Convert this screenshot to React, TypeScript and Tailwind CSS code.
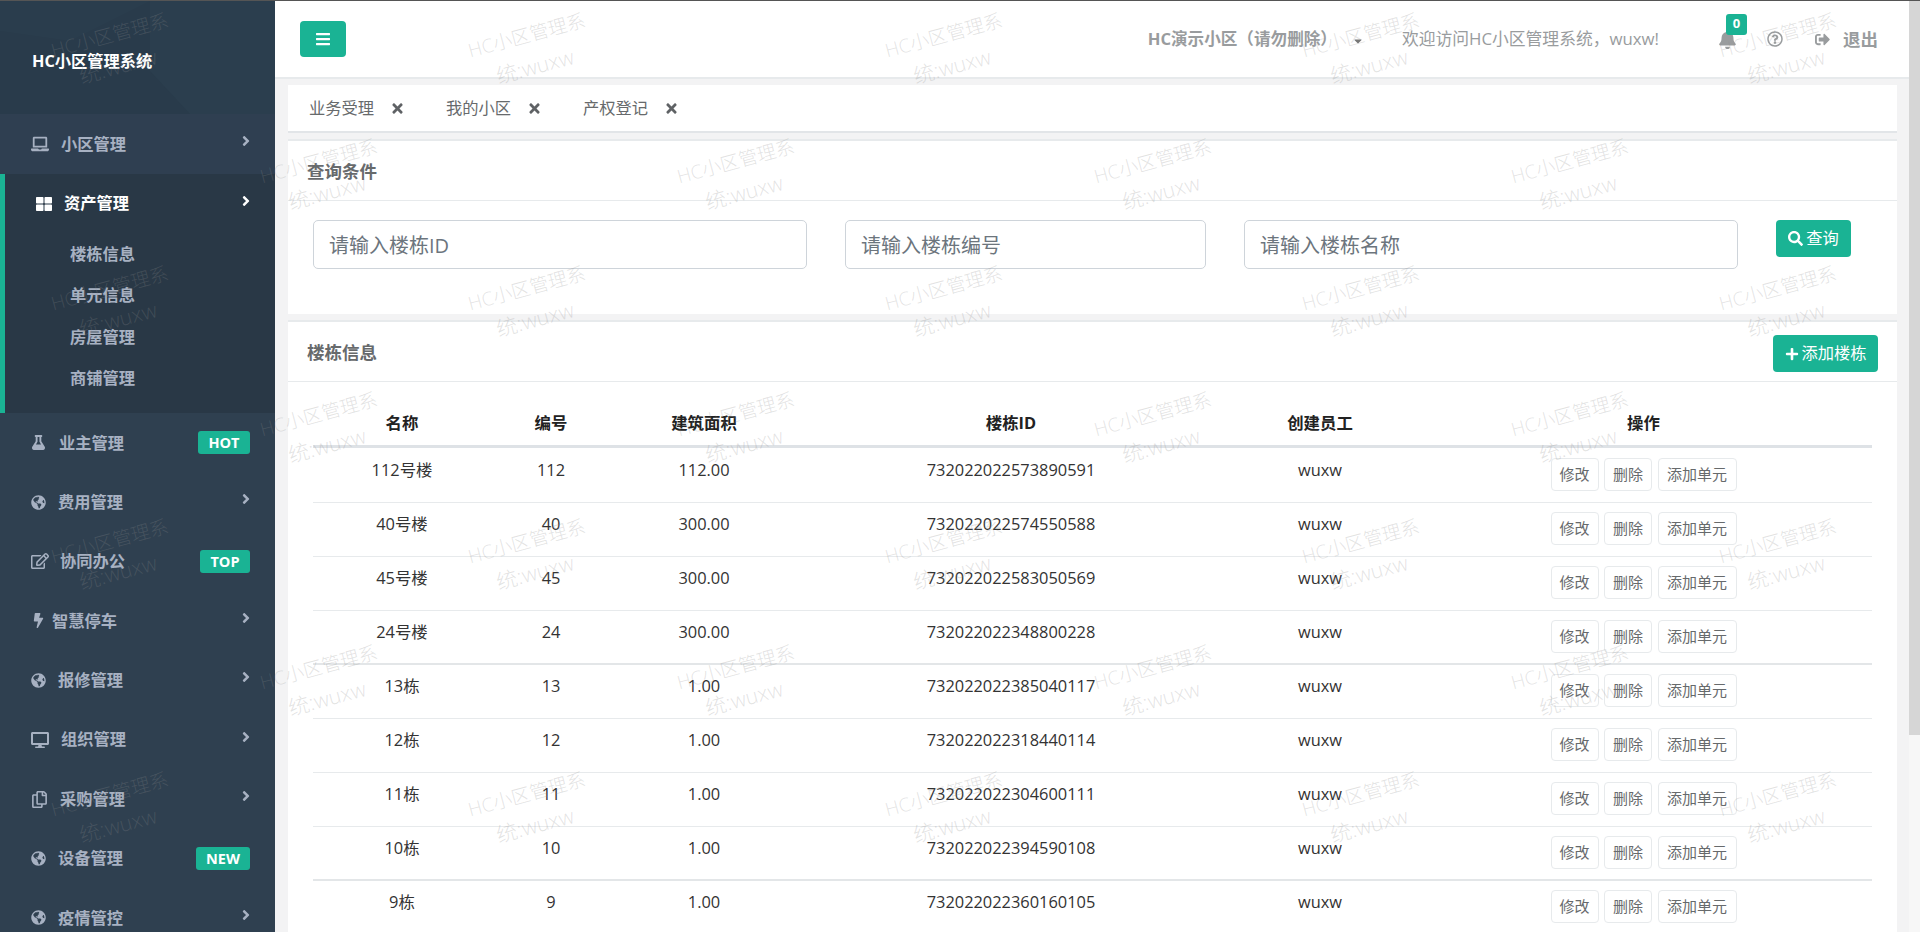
import {
  FaAngleRight, FaBars, FaBell, FaBolt, FaCaretDown, FaDesktop, FaFlask, FaGlobeAmericas, FaLaptop,
  FaPlus, FaRegCopy, FaRegEdit, FaRegQuestionCircle, FaSearch, FaSignOutAlt, FaThLarge, FaTimes,
} from 'react-icons/fa';

const MENU_TOP = [
  { label: '业主管理', icon: FaFlask, size: 15, box: 'w-[28px]', badge: 'HOT', badgeW: 'w-[52px]' },
  { label: '费用管理', icon: FaGlobeAmericas, size: 15, box: 'w-[27px]' },
  { label: '协同办公', icon: FaRegEdit, size: 18, box: 'w-[29px]', badge: 'TOP', badgeW: 'w-[50px]' },
  { label: '智慧停车', icon: FaBolt, size: 15, box: 'w-[21px]' },
  { label: '报修管理', icon: FaGlobeAmericas, size: 15, box: 'w-[27px]' },
  { label: '组织管理', icon: FaDesktop, size: 18, box: 'w-[30px]' },
  { label: '采购管理', icon: FaRegCopy, size: 17, box: 'w-[29px]' },
  { label: '设备管理', icon: FaGlobeAmericas, size: 15, box: 'w-[27px]', badge: 'NEW', badgeW: 'w-[54px]' },
  { label: '疫情管控', icon: FaGlobeAmericas, size: 15, box: 'w-[27px]' },
];

const SUBMENU = ['楼栋信息', '单元信息', '房屋管理', '商铺管理'];
const TABS = ['业务受理', '我的小区', '产权登记'];

const ROWS = [
  ['112号楼', '112', '112.00', '732022022573890591'],
  ['40号楼', '40', '300.00', '732022022574550588'],
  ['45号楼', '45', '300.00', '732022022583050569'],
  ['24号楼', '24', '300.00', '732022022348800228'],
  ['13栋', '13', '1.00', '732022022385040117'],
  ['12栋', '12', '1.00', '732022022318440114'],
  ['11栋', '11', '1.00', '732022022304600111'],
  ['10栋', '10', '1.00', '732022022394590108'],
  ['9栋', '9', '1.00', '732022022360160105'],
];

// staggered watermark grid, centres read off the screenshot
const WATERMARKS: { x: number; y: number }[] = [];
for (const y of [51, 304, 557, 810]) for (const x of [114, 531, 948, 1365, 1782]) WATERMARKS.push({ x, y });
for (const y of [177, 430, 683]) for (const x of [323, 740, 1157, 1574]) WATERMARKS.push({ x, y });

function Arrow({ active }: { active?: boolean }) {
  return <FaAngleRight size={16} className={`ml-auto mr-[21px] -mt-[6px] ${active ? 'text-white' : 'text-[#a7b1c2]'}`} />;
}

function Sidebar() {
  return (
    <aside className="w-[275px] shrink-0 bg-[#2f4050] text-[16.25px] font-semibold text-[#a7b1c2]">
      <div className="relative h-[113px] overflow-hidden bg-[#293b4b] pl-[32px] pt-[48px] font-bold text-white">
        <svg className="absolute inset-0" width="275" height="113">
          <polygon points="0,0 150,0 70,40 0,30" fill="#2a3d4d" />
          <polygon points="150,0 275,0 275,113 190,113 150,70" fill="#2b3e4e" />
        </svg>
        <span className="relative">HC小区管理系统</span>
      </div>

      <div className="flex h-[60px] items-center bg-[#2f3f51] pl-[31px]">
        <span className="w-[30px]"><FaLaptop size={18} /></span>
        小区管理
        <Arrow />
      </div>

      <div className="h-[239px] border-l-[5px] border-[#1ab394] bg-[#293846]">
        <div className="flex h-[59px] items-center pl-[31px] text-white">
          <span className="w-[28px]"><FaThLarge size={16} /></span>
          资产管理
          <Arrow active />
        </div>
        {SUBMENU.map((s) => (
          <div key={s} className="flex h-[41.6px] items-center pl-[65px]">{s}</div>
        ))}
      </div>

      {MENU_TOP.map((m) => (
        <div key={m.label} className="flex h-[59.4px] items-center pl-[31px]">
          <span className={m.box}><m.icon size={m.size} /></span>
          {m.label}
          {m.badge ? (
            <span className={`ml-auto mr-[25px] flex h-[23px] items-center justify-center rounded-[3px] bg-[#1ab394] text-[14.5px] font-bold text-white ${m.badgeW}`}>
              {m.badge}
            </span>
          ) : (
            <Arrow />
          )}
        </div>
      ))}
    </aside>
  );
}

function TopBar() {
  return (
    <header className="flex h-[78px] items-center border-b-2 border-[#e7eaec] bg-white pl-[25px] text-[#999c9e]">
      <button className="flex h-[36px] w-[46px] items-center justify-center rounded-[4px] bg-[#1ab394] text-white">
        <FaBars size={16} />
      </button>
      <span className="ml-auto text-[16.6px] font-bold">{'HC演示小区\uFF08请勿删除\uFF09'}</span>
      <FaCaretDown size={12} className="ml-[15px] mt-[3px] text-[#777]" />
      <span className="ml-[38px] text-[16.8px]">{'欢迎访问HC小区管理系统\uFF0Cwuxw!'}</span>
      <span className="relative ml-[59px]">
        <FaBell size={19} />
        <span className="absolute -top-[16px] left-[8px] flex h-[21px] w-[21px] items-center justify-center rounded-[3px] bg-[#1ab394] text-[13px] font-bold text-white">0</span>
      </span>
      <FaRegQuestionCircle size={16} className="ml-[30px]" />
      <FaSignOutAlt size={15} className="ml-[32px]" />
      <span className="ml-[13px] mr-[31px] text-[17.5px] font-bold">退出</span>
    </header>
  );
}

function Tabs() {
  return (
    <div className="mt-[6px] flex h-[48px] items-center border-b-2 border-[#e2e5e8] bg-white pl-[21px] text-[16.25px] text-[#676a6c]">
      {TABS.map((t) => (
        <span key={t} className="mr-[41px] flex items-center">
          {t}
          <FaTimes size={15} className="ml-[16px] text-[#5f6265]" />
        </span>
      ))}
    </div>
  );
}

const inputCls =
  'h-[49px] rounded-[5px] border border-[#ced4da] bg-white px-[15px] pt-[2px] text-[20px] outline-none placeholder:text-[#6c757d]';

function SearchCard() {
  return (
    <section className="mt-[6px] h-[175px] border-t-2 border-[#e7eaec] bg-white">
      <div className="flex h-[60px] items-center border-b border-[#e7eaec] pl-[19px] pt-[1px] text-[17.5px] font-bold text-[#676a6c]">
        查询条件
      </div>
      <div className="flex items-start gap-[38px] pl-[25px] pt-[19px]">
        <input className={`${inputCls} w-[494px]`} placeholder="请输入楼栋ID" />
        <input className={`${inputCls} w-[361px]`} placeholder="请输入楼栋编号" />
        <input className={`${inputCls} w-[494px]`} placeholder="请输入楼栋名称" />
        <button className="flex h-[37px] w-[75px] items-center justify-center gap-[3px] rounded-[4px] bg-[#1ab394] text-[16.25px] text-white">
          <FaSearch size={15} />
          查询
        </button>
      </div>
    </section>
  );
}

function ActionBtn({ children, wide }: { children: string; wide?: boolean }) {
  return (
    <button className={`h-[33px] rounded-[4px] border border-[#e7eaec] bg-white text-[15px] text-[#676a6c] ${wide ? 'w-[79px]' : 'w-[48px]'}`}>
      {children}
    </button>
  );
}

function BuildingCard() {
  return (
    <section className="mt-[6px] border-t-2 border-[#e7eaec] bg-white pb-[20px]">
      <div className="flex h-[60px] items-center justify-between border-b border-[#e7eaec] px-[19px] pt-[1px] text-[17.5px] font-bold text-[#676a6c]">
        楼栋信息
        <button className="mt-[3px] flex h-[37px] w-[105px] items-center justify-center gap-[3px] rounded-[4px] bg-[#1ab394] text-[16.25px] font-normal text-white">
          <FaPlus size={14} />
          添加楼栋
        </button>
      </div>
      <div className="pl-[25px] pr-[25px]">
        <table className="w-full table-fixed border-collapse text-center text-[16.4px] text-[#333]">
          <colgroup>
            <col className="w-[178px]" />
            <col className="w-[120px]" />
            <col className="w-[186px]" />
            <col className="w-[428px]" />
            <col className="w-[190px]" />
            <col />
          </colgroup>
          <thead>
            <tr className="border-b-[3px] border-[#dee2e6]">
              {['名称', '编号', '建筑面积', '楼栋ID', '创建员工', '操作'].map((h) => (
                <th key={h} className="h-[64px] pb-[9px] align-bottom font-bold text-[#222]">{h}</th>
              ))}
            </tr>
          </thead>
          <tbody>
            {ROWS.map((r, i) => {
              // the first row sits under the thick header line, so it needs a little more room
              const textCell = i === 0 ? 'h-[56px] pt-[10px] align-top' : 'h-[54px] pt-[9px] align-top';
              return (
                <tr key={r[3]} className={i === 3 || i === 7 ? 'border-b-2 border-[#e3e6e8]' : 'border-b border-[#e7eaec]'}>
                  {r.map((c) => (
                    <td key={c} className={textCell}>{c}</td>
                  ))}
                  <td className={textCell}>wuxw</td>
                  <td className={i === 0 ? 'pt-[10px] align-top' : 'pt-[9px] align-top'}>
                    <div className="flex justify-center gap-[5.5px]">
                      <ActionBtn>修改</ActionBtn>
                      <ActionBtn>删除</ActionBtn>
                      <ActionBtn wide>添加单元</ActionBtn>
                    </div>
                  </td>
                </tr>
              );
            })}
          </tbody>
        </table>
      </div>
    </section>
  );
}

export default function App() {
  return (
    <div className="relative flex h-[932px] flex-col overflow-hidden border-t border-[#555] bg-[#f3f3f4] font-['Open_Sans','Noto_Sans_CJK_SC',sans-serif]">
      <div className="flex flex-1 overflow-hidden">
        <Sidebar />
        <main className="min-w-0 flex-1">
          <TopBar />
          <div className="pl-[13px] pr-[12px]">
            <Tabs />
            <SearchCard />
            <BuildingCard />
          </div>
        </main>
        {/* scrollbar */}
        <div className="w-[11px] shrink-0 bg-[#f7f7f7]">
          <div className="h-[734px] bg-[#d6d6d6]" />
        </div>
      </div>

      {/* watermark layer */}
      <div className="pointer-events-none absolute inset-0">
        {WATERMARKS.map((w) => (
          <div
            key={`${w.x}-${w.y}`}
            className="absolute -translate-x-1/2 -translate-y-1/2 -rotate-15 whitespace-nowrap text-center text-[19px] font-light leading-[32px] text-[#8c8c8c]/25"
            style={{ left: w.x, top: w.y - 1 }}
          >
            HC小区管理系
            <br />
            <span className="text-[21px]">统:wuxw</span>
          </div>
        ))}
      </div>
    </div>
  );
}
